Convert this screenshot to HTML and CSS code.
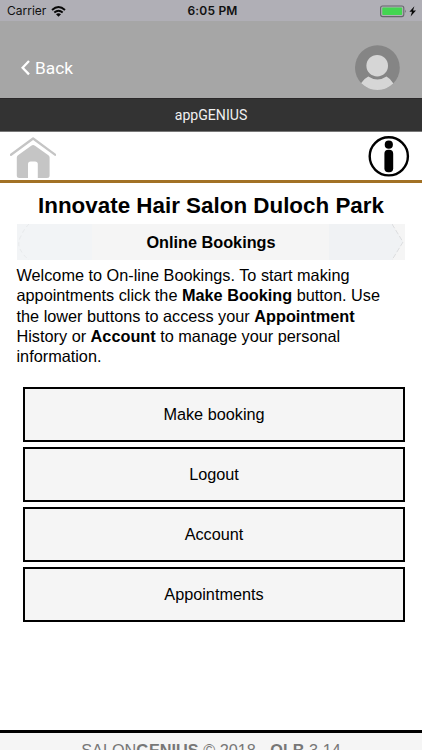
FILE: index.html
```
<!DOCTYPE html>
<html lang="en">
<head>
<meta charset="utf-8">
<meta name="viewport" content="width=device-width, initial-scale=1">
<title>Online Bookings</title>
<link rel="stylesheet" href="styles.css">
</head>
<body>
<div class="status">
  <div class="carrier"><span>Carrier</span>
    <svg width="15" height="11" viewBox="0 0 15 11" fill="none" stroke="#080808" stroke-width="1.9"><path d="M1 4Q7.5-1.8 14 4M3.3 6.5Q7.5 2.9 11.7 6.5"/><path d="M5 8.2Q7.5 6.2 10 8.2L7.5 10.7Z" fill="#080808" stroke="none"/></svg>
  </div>
  <span class="time">6:05 PM</span>
  <svg class="battery" width="38" height="13" viewBox="0 0 38 13"><rect x=".6" y="1" width="23.2" height="10.6" rx="2" fill="none" stroke="#66666c" stroke-width="1.1"/><rect x="2.3" y="2.6" width="19.8" height="7.4" rx=".8" fill="#43d551"/><path d="M25 4.5Q26.5 6.3 25 8.1Z" fill="#66666c"/><path d="M34.4 1.2L29.4 6.8H32L30.6 11.6L36 5.5H33Z" fill="#080808"/></svg>
</div>
<header class="header">
  <a class="back"><svg width="9" height="16" viewBox="0 0 9 16"><path d="M8 1L1.6 7.7L8 14.4" fill="none" stroke="#fff" stroke-width="2.3"/></svg><span>Back</span></a>
  <svg class="avatar" width="45" height="46" viewBox="0 0 45 46"><defs><clipPath id="disc"><circle cx="22.4" cy="22.7" r="22.4"/></clipPath></defs><circle cx="22.4" cy="22.7" r="22.4" fill="#858585"/><g clip-path="url(#disc)"><path d="M0 46L6.2 38Q9 33.8 13.3 31.6Q22.4 37.6 31.5 31.6Q35.5 33.8 38 38L45 46Z" fill="#d6d6d6"/></g><circle cx="22.2" cy="20.7" r="10.8" fill="#d6d6d6"/></svg>
</header>
<div class="appbar"><span>appGENIUS</span></div>
<nav class="nav">
  <svg class="home" width="46" height="42" viewBox="0 0 46 42"><path d="M1 17.7L23.1 1.5L45 17.7" fill="none" stroke="#c5c5c5" stroke-width="2.3" stroke-linejoin="round" stroke-linecap="round"/><path d="M23.1 8Q24 8 25 8.8L38.4 18.2Q39.6 19 39.6 20.6V38.5Q39.6 41 37 41H27.8V27Q27.8 24.4 25 24.4H20.7Q18 24.4 18 27V41H9.4Q6.8 41 6.8 38.5V20.6Q6.8 19 8 18.2L21.2 8.8Q22.2 8 23.1 8Z" fill="#c5c5c5"/></svg>
  <svg class="info" width="42" height="42" viewBox="0 0 42 42"><circle cx="20.8" cy="20.3" r="19.1" fill="none" stroke="#000" stroke-width="2.4"/><circle cx="20.8" cy="8.7" r="4.1"/><rect x="16.4" y="13.7" width="8.8" height="22.6" rx="4"/></svg>
</nav>
<main class="content">
  <h1>Innovate Hair Salon Duloch Park</h1>
  <h2><svg class="edge" width="13" height="36" viewBox="0 0 13 36"><path d="M12 0Q7 5 4 12Q0 19 3 25Q6 31 12 36" fill="none" stroke="#e8eaec" stroke-dasharray="4 3"/></svg><span>Online Bookings</span><svg class="edge" width="13" height="36" viewBox="0 0 13 36"><path d="M0 0L11 18L0 36" fill="#f0f2f4" stroke="#dcdddf" stroke-dasharray="5 2"/></svg></h2>
  <p>Welcome to On-line Bookings. To start making<br>appointments click the <b>Make Booking</b> button. Use<br>the lower buttons to access your <b>Appointment</b><br>History or <b>Account</b> to manage your personal<br>information.</p>
  <div class="actions">
    <button>Make booking</button>
    <button>Logout</button>
    <button>Account</button>
    <button>Appointments</button>
  </div>
</main>
<footer class="footer">SALON<b>GENIUS</b> © 2018 - <b>OLB</b> 3.14</footer>
</body>
</html>
```
FILE: styles.css
```
* { box-sizing: border-box; }
html, body { height: 100%; overflow: hidden; }
body {
  margin: 0;
  display: flex;
  flex-direction: column;
  background: #fff;
  color: #000;
  font-family: "Liberation Sans", Arial, sans-serif;
}
svg { display: block; flex: none; }
.status {
  flex: none;
  height: 21px;
  display: grid;
  grid-template-columns: 1fr auto 1fr;
  align-items: center;
  padding: 1px 4px 0 7px;
  background: #b0afb6;
  color: #111;
  font: 12px/20px Inter, sans-serif;
}
.carrier { display: flex; align-items: center; gap: 5px; }
.time { font-weight: 600; font-size: 12px; letter-spacing: .2px; }
.battery { justify-self: end; }
.header {
  flex: none;
  height: 77px;
  display: flex;
  justify-content: space-between;
  padding: 24px 22px 0 21px;
  background: #a6a6a6;
}
.back {
  display: flex;
  align-items: center;
  gap: 5px;
  height: 46px;
  color: #fff;
  font: 17.3px/20px Roboto, sans-serif;
}
.appbar {
  flex: none;
  height: 34px;
  background: #333;
  border-top: 1px solid #2a2829;
  border-bottom: 1px solid #777;
  color: #f0f0f0;
  text-align: center;
  font: 14.1px/32px Roboto, sans-serif;
}
.nav {
  flex: none;
  height: 51px;
  display: flex;
  justify-content: space-between;
  padding: 4px 12px 0 10px;
  border-bottom: 3px solid #a27125;
}
.home { margin-top: 1px; }
.content { flex: 1; padding: 8px 17px 0; }
h1 {
  margin: 0 -10px;
  font-size: 22.4px;
  line-height: 30px;
  text-align: center;
  white-space: nowrap;
}
h2 {
  display: flex;
  justify-content: space-between;
  align-items: center;
  height: 36px;
  margin: 3px 0 5px;
  background: linear-gradient(90deg, #f2f4f6 0 75px, #f5f5f5 75px 312px, #f0f2f4 312px 376px, #f5f5f5 376px);
  font-size: 16.25px;
}
p {
  margin: 0 0 0 -.5px;
  font-size: 16.27px;
  line-height: 20.3px;
  white-space: nowrap;
}
.actions {
  display: grid;
  gap: 5px;
  margin: 20.5px 0 0 6px;
}
button {
  height: 55px;
  padding: 0;
  border: 2px solid #000;
  border-radius: 0;
  background: #f5f5f5;
  color: #000;
  font: 16.25px "Liberation Sans", Arial, sans-serif;
}
.footer {
  flex: none;
  height: 20px;
  border-top: 3px solid #000;
  background: #f5f5f5;
  color: #777;
  text-align: center;
  font-size: 16.25px;
  line-height: 34px;
  overflow: hidden;
}
```
